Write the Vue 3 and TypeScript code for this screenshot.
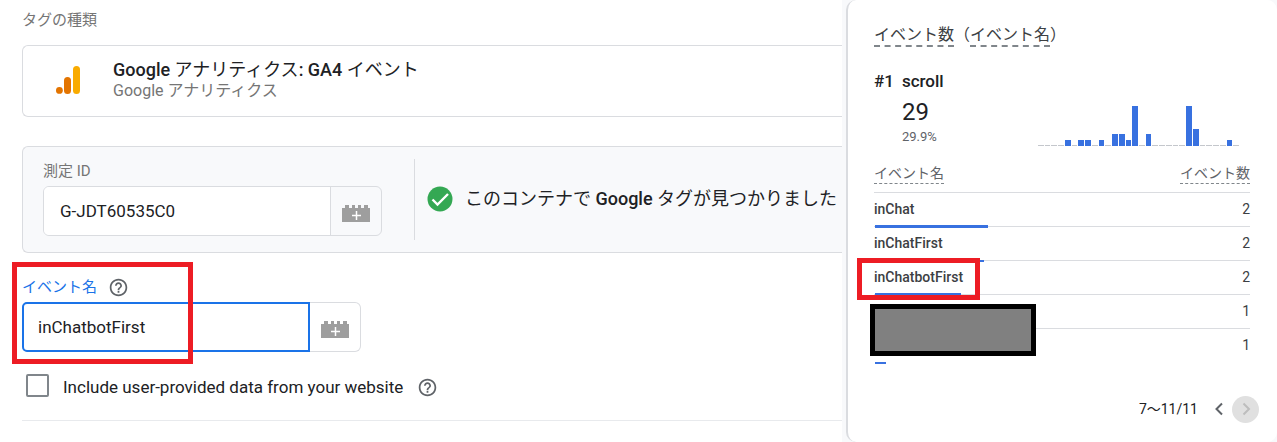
<script setup lang="ts">
import { ref } from 'vue'

interface EventRow {
  name: string
  count: number
  share: number
}

const measurementId = ref('G-JDT60535C0')
const eventName = ref('inChatbotFirst')
const includeUserData = ref(false)

const rows: EventRow[] = [
  { name: 'inChat', count: 2, share: 30 },
  { name: 'inChatFirst', count: 2, share: 29 },
  { name: 'inChatbotFirst', count: 2, share: 23 },
  { name: '', count: 1, share: 3 },
  { name: '', count: 1, share: 3 },
]

const bars: number[] = [
  0, 0, 0, 0, 6, 0, 6, 6, 0, 6, 0, 12, 12, 6, 40,
  0, 12, 0, 0, 0, 0, 0, 40, 17, 0, 0, 0, 0, 6, 0,
]
</script>

<template>
  <div class="page">
    <main class="editor">
      <div class="label type-label">タグの種類</div>
      <section class="type-card">
        <svg class="ga-logo" viewBox="0 0 26 28" aria-hidden="true">
          <circle cx="4.4" cy="24.4" r="3.4" fill="#e37400" />
          <rect x="9" y="11" width="7" height="17" rx="3.5" fill="#e37400" />
          <rect x="18" y="0" width="7" height="28" rx="3.5" fill="#f9ab00" />
        </svg>
        <div>
          <div class="type-title">Google <span>アナリティクス</span>: GA4 <span>イベント</span></div>
          <div class="type-sub">Google アナリティクス</div>
        </div>
      </section>

      <section class="config">
        <div class="config-field">
          <label class="label" for="mid">測定 ID</label>
          <div class="combo">
            <input id="mid" v-model="measurementId" class="text" type="text" />
            <button class="brick" type="button" aria-label="変数を選択">
              <svg viewBox="0 0 28 17" aria-hidden="true">
                <path d="M0 3h3V0h4v3h3V0h3v3h3V0h3v3h3V0h4v3h2v14H0z" fill="#9e9e9e" />
                <path d="M14.500 6v9M10 10.500h9" stroke="#fff" stroke-width="1.500" />
              </svg>
            </button>
          </div>
        </div>
        <div class="found">
          <svg class="check" viewBox="0 0 26 26" aria-hidden="true">
            <circle cx="13" cy="13" r="12.500" fill="#34a853" />
            <path d="M5.500 13.500l5 5L21 8" fill="none" stroke="#fff" stroke-width="2.400" />
          </svg>
          <p>このコンテナで <b>Google</b> タグが見つかりました</p>
        </div>
      </section>

      <section class="event-field">
        <div class="event-label">
          <label for="ename">イベント名</label>
          <svg class="help" viewBox="0 0 24 24" aria-hidden="true">
            <path d="M11 18h2v-2h-2v2zm1-16C6.480 2 2 6.480 2 12s4.480 10 10 10 10-4.480 10-10S17.520 2 12 2zm0 18c-4.410 0-8-3.590-8-8s3.590-8 8-8 8 3.590 8 8-3.590 8-8 8zm0-14c-2.210 0-4 1.790-4 4h2c0-1.100.9-2 2-2s2 .9 2 2c0 2-3 1.750-3 5h2c0-2.250 3-2.500 3-5 0-2.210-1.790-4-4-4z" />
          </svg>
        </div>
        <div class="combo active">
          <input id="ename" v-model="eventName" class="text" type="text" />
          <button class="brick" type="button" aria-label="変数を選択">
            <svg viewBox="0 0 28 17" aria-hidden="true">
              <path d="M0 3h3V0h4v3h3V0h3v3h3V0h3v3h3V0h4v3h2v14H0z" fill="#9e9e9e" />
              <path d="M14.500 6v9M10 10.500h9" stroke="#fff" stroke-width="1.500" />
            </svg>
          </button>
        </div>
        <div class="mark mark-field"></div>
      </section>

      <div class="user-data">
        <input id="udata" v-model="includeUserData" type="checkbox" />
        <label for="udata">Include user-provided data from your website</label>
        <svg class="help" viewBox="0 0 24 24" aria-hidden="true">
          <path d="M11 18h2v-2h-2v2zm1-16C6.480 2 2 6.480 2 12s4.480 10 10 10 10-4.480 10-10S17.520 2 12 2zm0 18c-4.410 0-8-3.590-8-8s3.590-8 8-8 8 3.590 8 8-3.590 8-8 8zm0-14c-2.210 0-4 1.790-4 4h2c0-1.100.9-2 2-2s2 .9 2 2c0 2-3 1.750-3 5h2c0-2.250 3-2.500 3-5 0-2.210-1.790-4-4-4z" />
        </svg>
      </div>
    </main>

    <aside class="report">
      <h2><span class="dashed">イベント数</span>（<span class="dashed">イベント名</span>）</h2>
      <div class="summary">
        <div class="rank">#1</div>
        <div class="top">
          <div class="top-name">scroll</div>
          <div class="top-count">29</div>
          <div class="top-share">29.9%</div>
        </div>
        <div class="chart">
          <i v-for="(h, i) in bars" :key="i" :class="{ filled: h > 0 }" :style="{ height: (h || 1) + 'px' }"></i>
        </div>
      </div>

      <table>
        <thead>
          <tr>
            <th><span class="dashed">イベント名</span></th>
            <th><span class="dashed">イベント数</span></th>
          </tr>
        </thead>
        <tbody>
          <tr v-for="(row, i) in rows" :key="i">
            <td>
              {{ row.name }}
              <div class="share" :style="{ width: row.share + '%' }"></div>
              <div v-if="row.name === 'inChatbotFirst'" class="mark mark-row"></div>
              <div v-if="i === 3" class="redacted"></div>
            </td>
            <td>{{ row.count }}</td>
          </tr>
        </tbody>
      </table>

      <nav class="pager">
        <span>7～11/11</span>
        <button type="button" aria-label="前へ">
          <svg viewBox="0 0 12 14" aria-hidden="true"><path d="M9 1.500L3.500 7 9 12.500" /></svg>
        </button>
        <button class="next" type="button" aria-label="次へ" disabled>
          <svg viewBox="0 0 12 14" aria-hidden="true"><path d="M3.500 1.500L9 7l-5.500 5.500" /></svg>
        </button>
      </nav>
    </aside>
  </div>
</template>

<style>
body {
  margin: 0;
  background: #fff;
}
</style>

<style scoped>
.page {
  display: grid;
  grid-template-columns: minmax(0, 1fr) 431px;
  column-gap: 4px;
  min-height: 100vh;
  overflow: hidden;
  background: #f8f9fb;
  color: #202124;
  font-family: Roboto, "Noto Sans CJK JP", sans-serif;
}

.page *,
.page *::before {
  box-sizing: border-box;
}

button {
  padding: 0;
  border: 0;
  background: none;
}

.editor {
  padding: 8px 0 20px 22px;
  background: #fff;
}

.label {
  display: block;
  color: #757575;
  font-size: 15px;
  line-height: 24px;
}

.type-card {
  display: flex;
  align-items: center;
  gap: 32px;
  height: 72px;
  margin-top: 13px;
  padding: 0 0 2px 32px;
  border: 1px solid #dadce0;
  border-right: 0;
  border-radius: 6px 0 0 6px;
}

.ga-logo {
  width: 26px;
  height: 28px;
}

.type-title {
  font-size: 18px;
  font-weight: 500;
  line-height: 22px;
}

.type-title span {
  font-weight: 400;
}

.type-sub {
  color: #757575;
  font-size: 16px;
  line-height: 20px;
}

.config {
  display: flex;
  gap: 32px;
  margin-top: 29px;
  padding: 12px 0 12px 20px;
  border: 1px solid #dadce0;
  border-right: 0;
  border-radius: 6px 0 0 6px;
  background: #f8f9fb;
}

.config-field {
  flex: 0 0 339px;
  padding-bottom: 4px;
}

.combo {
  display: flex;
  width: 339px;
  height: 50px;
  margin-top: 3px;
  border: 1px solid #dadce0;
  border-radius: 6px;
}

.text {
  flex: 1;
  min-width: 0;
  padding: 0 16px;
  border: 0;
  border-right: 1px solid #dadce0;
  border-radius: 5px 0 0 5px;
  outline: 0;
  background: #fff;
  color: #202124;
  font: 400 17px/24px Roboto, sans-serif;
}

.brick {
  display: flex;
  align-items: center;
  justify-content: center;
  width: 50px;
  padding-top: 4px;
}

.brick svg {
  width: 28px;
  height: 17px;
}

.active {
  border-left: 0;
}

.active .text {
  margin: -1px 0;
  padding: 0 14px;
  border: 2px solid #1a73e8;
}

.found {
  display: flex;
  flex: 1;
  align-items: center;
  gap: 12px;
  padding-bottom: 2px;
  padding-left: 12px;
  border-left: 1px solid #dadce0;
}

.check {
  flex: none;
  width: 26px;
  height: 26px;
}

.found p {
  margin: 0;
  font-size: 18px;
  line-height: 24px;
  white-space: nowrap;
}

.found b {
  font-weight: 500;
}

.event-field {
  position: relative;
  margin-top: 22px;
}

.event-label {
  display: flex;
  align-items: center;
  gap: 11px;
  color: #1a73e8;
  font-size: 15px;
  line-height: 24px;
}

.help {
  width: 21px;
  height: 21px;
  fill: #5f6368;
}

.mark {
  position: absolute;
  border: 5px solid #ed1c24;
  pointer-events: none;
}

.mark-field {
  top: -13px;
  left: -10px;
  width: 181px;
  height: 102px;
}

.user-data {
  display: flex;
  align-items: center;
  gap: 14px;
  padding: 17px 0 19px 4px;
  border-bottom: 1px solid #e8eaed;
  font-size: 17px;
  line-height: 28px;
}

.user-data label,
.user-data .help {
  margin-top: 4px;
}

.user-data input {
  appearance: none;
  width: 23px;
  height: 23px;
  margin: 0;
  border: 2px solid #80868b;
  border-radius: 2px;
}

.report {
  padding: 25px 27px 16px 26px;
  border: 1px solid #dadce0;
  border-width: 0 0 0 2px;
  border-radius: 10px;
  background: #fff;
}

h2 {
  margin: 0;
  color: #3c4043;
  font-size: 16px;
  font-weight: 400;
  line-height: 20px;
}

.dashed {
  display: inline-block;
  border-bottom: 1px dashed #80868b;
}

h2 .dashed {
  border-bottom-width: 2px;
}

.summary {
  display: flex;
  gap: 8px;
  margin-top: 22px;
}

.rank,
.top-name {
  font-size: 17px;
  font-weight: 500;
  line-height: 24px;
}

.top-count {
  font-size: 24px;
  line-height: 38px;
}

.top-share {
  color: #5f6368;
  font-size: 13px;
  line-height: 12px;
}

.chart {
  display: flex;
  align-items: flex-end;
  gap: 1px;
  width: 201px;
  height: 77px;
  margin-right: 11px;
  margin-left: auto;
}

.chart i {
  flex: 1;
  background: #c4c7cc;
}

.chart .filled {
  background: #3871e0;
}

table {
  width: 100%;
  margin-top: 17px;
  border-collapse: collapse;
  color: #3c4043;
  font-size: 14px;
}

th {
  padding: 0 0 8px;
  color: #5f6368;
  font-weight: 400;
  line-height: 20px;
  text-align: left;
}

td {
  height: 34px;
  padding: 0 0 2px;
  border-top: 1px solid #dadce0;
  line-height: 20px;
}

td:first-child {
  font-weight: 500;
}

th:last-child,
td:last-child {
  text-align: right;
}

tbody tr {
  position: relative;
}

.share {
  position: absolute;
  bottom: -1px;
  left: 1px;
  height: 2px;
  background: #3871e0;
}

tbody tr:first-child .share {
  height: 3px;
}

.mark-row {
  top: -3px;
  left: -17px;
  width: 123px;
  height: 42px;
}

.redacted {
  position: absolute;
  z-index: 1;
  top: 9px;
  left: -4px;
  width: 166px;
  height: 52px;
  border: 5px solid #000;
  background: #808080;
}

tbody tr:nth-child(3) .share {
  bottom: 0;
}

.pager {
  display: flex;
  align-items: center;
  justify-content: flex-end;
  margin: 33px -9px 0 0;
  font-size: 14px;
  line-height: 20px;
}

.pager button {
  display: flex;
  align-items: center;
  justify-content: center;
  width: 27px;
  height: 27px;
  margin-left: 7px;
}

.pager .next {
  margin-left: 0;
  border-radius: 50%;
  background: #e0e0e0;
}

.pager svg {
  width: 12px;
  height: 14px;
  fill: none;
  stroke: #5f6368;
  stroke-width: 2;
}

.pager .next svg {
  stroke: #bdbdbd;
}
</style>
